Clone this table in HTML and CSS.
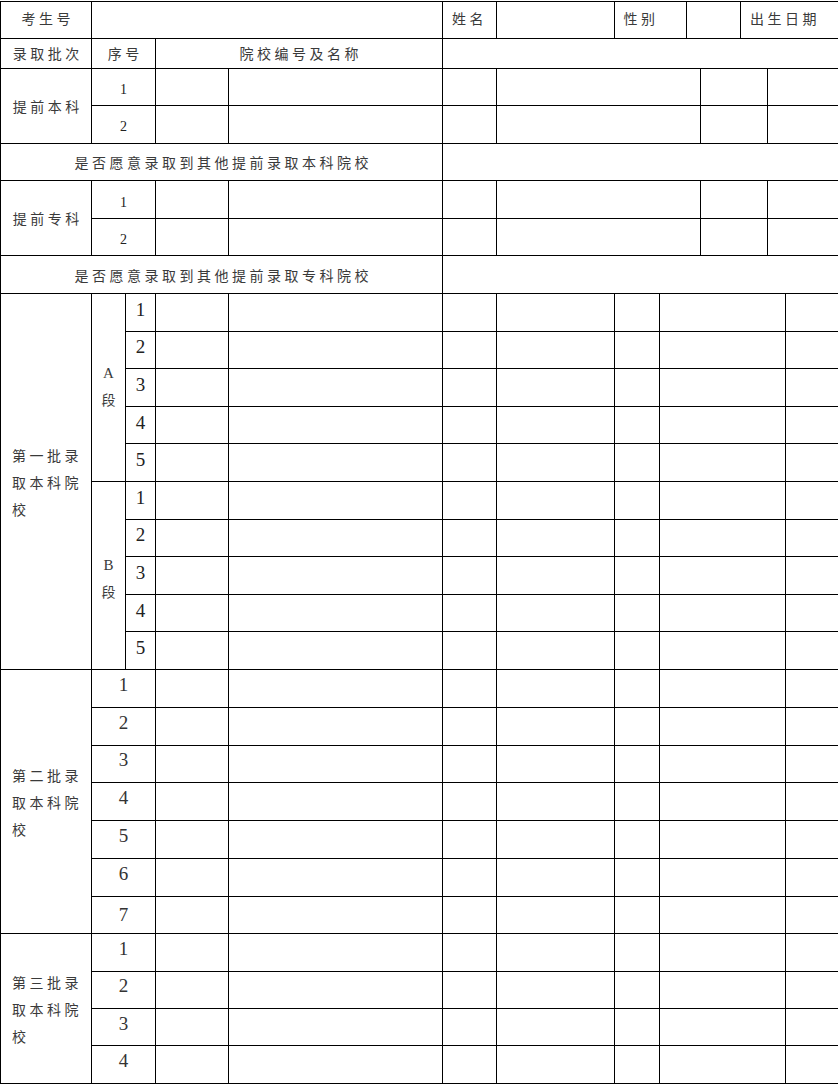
FILE: index.html
```html
<!DOCTYPE html>
<html lang="zh">
<head>
<meta charset="utf-8">
<title>志愿表</title>
<link rel="stylesheet" href="styles.css">
</head>
<body>
<div class="page">
<table class="form">
  <colgroup>
    <col class="w1"><col class="w2"><col class="w3"><col class="w4"><col class="w5"><col class="w6"><col class="w7">
    <col class="w8"><col class="w9"><col class="w10"><col class="w11"><col class="w12"><col class="w13"><col class="w14">
  </colgroup>
  <tbody>
    <tr class="r-head">
      <td class="cn c">考生号</td>
      <td colspan="4"></td>
      <td class="cn l">姓名</td>
      <td></td>
      <td colspan="2" class="cn l">性别</td>
      <td colspan="2"></td>
      <td colspan="3" class="cn l">出生日期</td>
    </tr>
    <tr class="r-sub">
      <td class="cn c">录取批次</td>
      <td colspan="2" class="cn c">序号</td>
      <td colspan="2" class="cn c">院校编号及名称</td>
      <td colspan="9"></td>
    </tr>

    <tr class="r">
      <td rowspan="2" class="cn c">提前本科</td>
      <td colspan="2" class="num-s">1</td>
      <td></td><td></td><td></td><td colspan="4"></td><td colspan="2"></td><td colspan="2"></td>
    </tr>
    <tr class="r">
      <td colspan="2" class="num-s">2</td>
      <td></td><td></td><td></td><td colspan="4"></td><td colspan="2"></td><td colspan="2"></td>
    </tr>
    <tr class="r">
      <td colspan="5" class="cn c">是否愿意录取到其他提前录取本科院校</td>
      <td colspan="9"></td>
    </tr>

    <tr class="r">
      <td rowspan="2" class="cn c">提前专科</td>
      <td colspan="2" class="num-s">1</td>
      <td></td><td></td><td></td><td colspan="4"></td><td colspan="2"></td><td colspan="2"></td>
    </tr>
    <tr class="r">
      <td colspan="2" class="num-s">2</td>
      <td></td><td></td><td></td><td colspan="4"></td><td colspan="2"></td><td colspan="2"></td>
    </tr>
    <tr class="r">
      <td colspan="5" class="cn c">是否愿意录取到其他提前录取专科院校</td>
      <td colspan="9"></td>
    </tr>

    <tr class="r">
      <td rowspan="10" class="cn batch">第一批录取本科院校</td>
      <td rowspan="5" class="seg"><span class="lat">A</span><br>段</td>
      <td class="num-b">1</td>
      <td></td><td></td><td></td><td></td><td></td><td colspan="5"></td><td></td>
    </tr>
    <tr class="r"><td class="num-b">2</td><td></td><td></td><td></td><td></td><td></td><td colspan="5"></td><td></td></tr>
    <tr class="r"><td class="num-b">3</td><td></td><td></td><td></td><td></td><td></td><td colspan="5"></td><td></td></tr>
    <tr class="r"><td class="num-b">4</td><td></td><td></td><td></td><td></td><td></td><td colspan="5"></td><td></td></tr>
    <tr class="r"><td class="num-b">5</td><td></td><td></td><td></td><td></td><td></td><td colspan="5"></td><td></td></tr>
    <tr class="r">
      <td rowspan="5" class="seg seg-b"><span class="lat">B</span><br>段</td>
      <td class="num-b">1</td>
      <td></td><td></td><td></td><td></td><td></td><td colspan="5"></td><td></td>
    </tr>
    <tr class="r"><td class="num-b">2</td><td></td><td></td><td></td><td></td><td></td><td colspan="5"></td><td></td></tr>
    <tr class="r"><td class="num-b">3</td><td></td><td></td><td></td><td></td><td></td><td colspan="5"></td><td></td></tr>
    <tr class="r"><td class="num-b">4</td><td></td><td></td><td></td><td></td><td></td><td colspan="5"></td><td></td></tr>
    <tr class="r"><td class="num-b">5</td><td></td><td></td><td></td><td></td><td></td><td colspan="5"></td><td></td></tr>

    <tr class="r2">
      <td rowspan="7" class="cn batch">第二批录取本科院校</td>
      <td colspan="2" class="num-m">1</td>
      <td></td><td></td><td></td><td></td><td></td><td colspan="5"></td><td></td>
    </tr>
    <tr class="r2"><td colspan="2" class="num-m">2</td><td></td><td></td><td></td><td></td><td></td><td colspan="5"></td><td></td></tr>
    <tr class="r2"><td colspan="2" class="num-m">3</td><td></td><td></td><td></td><td></td><td></td><td colspan="5"></td><td></td></tr>
    <tr class="r2"><td colspan="2" class="num-m">4</td><td></td><td></td><td></td><td></td><td></td><td colspan="5"></td><td></td></tr>
    <tr class="r2"><td colspan="2" class="num-m">5</td><td></td><td></td><td></td><td></td><td></td><td colspan="5"></td><td></td></tr>
    <tr class="r2"><td colspan="2" class="num-m">6</td><td></td><td></td><td></td><td></td><td></td><td colspan="5"></td><td></td></tr>
    <tr class="r2"><td colspan="2" class="num-m num-low">7</td><td></td><td></td><td></td><td></td><td></td><td colspan="5"></td><td></td></tr>

    <tr class="r3">
      <td rowspan="4" class="cn batch">第三批录取本科院校</td>
      <td colspan="2" class="num-m">1</td>
      <td></td><td></td><td></td><td></td><td></td><td colspan="5"></td><td></td>
    </tr>
    <tr class="r3"><td colspan="2" class="num-m">2</td><td></td><td></td><td></td><td></td><td></td><td colspan="5"></td><td></td></tr>
    <tr class="r3"><td colspan="2" class="num-m">3</td><td></td><td></td><td></td><td></td><td></td><td colspan="5"></td><td></td></tr>
    <tr class="r3"><td colspan="2" class="num-m">4</td><td></td><td></td><td></td><td></td><td></td><td colspan="5"></td><td></td></tr>
  </tbody>
</table>
</div>
</body>
</html>
```

FILE: styles.css
```css
html, body {
  margin: 0;
  padding: 0;
  background: #ffffff;
  overflow: hidden;
}

.page {
  width: 838px;
  height: 1087px;
  overflow: hidden;
  padding: 0.5px 0 0 0;
  box-sizing: border-box;
}

.form {
  border-collapse: collapse;
  table-layout: fixed;
  width: 860px;
  font-family: "Noto Sans CJK SC", "Liberation Serif", serif;
  color: #3a3a3a;
}

.w1 { width: 91px; }
.w2 { width: 34px; }
.w3 { width: 30px; }
.w4 { width: 73px; }
.w5 { width: 214px; }
.w6 { width: 54px; }
.w7 { width: 117.5px; }
.w8 { width: 45px; }
.w9 { width: 27px; }
.w10 { width: 14px; }
.w11 { width: 40.5px; }
.w12 { width: 27px; }
.w13 { width: 18px; }
.w14 { width: 75px; }

.form td {
  border: 1px solid #000;
  padding: 0;
  vertical-align: middle;
  overflow: hidden;
  white-space: nowrap;
}

.r-head { height: 37px; }
.r-sub { height: 30px; }
.r { height: 37.6px; }
.r2 { height: 37.75px; }
.r3 { height: 37.4px; }

.form td.cn {
  font-size: 14px;
  letter-spacing: 3.5px;
  line-height: 20px;
}

.form td.c {
  text-align: center;
  padding-left: 3.5px;
}

.form td.l {
  text-align: left;
  padding-left: 9px;
}

.form .r-head td.cn { padding-bottom: 3px; }

.form td.batch {
  white-space: normal;
  text-align: left;
  padding: 2px 4px 0 11px;
  line-height: 27px;
  word-break: break-all;
}

.form td.seg {
  font-family: "Noto Sans CJK SC", sans-serif;
  font-size: 14px;
  line-height: 26px;
  text-align: center;
  padding-bottom: 4px;
}

.form td.seg-b { padding-bottom: 0; padding-top: 4px; }

.lat {
  font-family: "Liberation Serif", serif;
  font-size: 15px;
}

.form td.num-s {
  font-family: "Liberation Serif", serif;
  font-size: 14px;
  text-align: center;
  padding-top: 6px;
  color: #222;
}

.form td.num-b {
  font-family: "Liberation Serif", serif;
  font-size: 19px;
  text-align: center;
  padding-bottom: 5px;
  color: #222;
}

.form td.num-m {
  font-family: "Liberation Serif", serif;
  font-size: 19px;
  text-align: center;
  padding-bottom: 7px;
  color: #333;
}

.form td.num-low { padding-bottom: 0; }
```
